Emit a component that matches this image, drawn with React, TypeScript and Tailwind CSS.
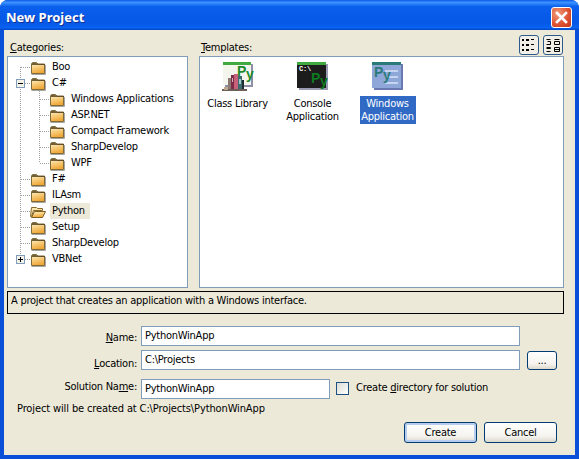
import React from 'react';

const xpButton =
  'rounded-[3px] border border-[#003c74] bg-[linear-gradient(180deg,#ffffff_0%,#f4f3ee_70%,#dcd8cc_100%)] text-black';

function Folder({ x, open = false }: { x: number; open?: boolean }) {
  if (open) {
    return (
      <g transform={`translate(${x} 1)`}>
        <path d="M1.5 3.5h5l1 1h5v2h-9l-2 6h-1z" fill="#f6e6ae" stroke="#8a6a2a" />
        <path d="M4.5 7.5h11l-3 6h-11z" fill="url(#folderFill)" stroke="#7d5f22" />
      </g>
    );
  }
  return (
    <g transform={`translate(${x} 1)`}>
      <path d="M1.5 3.5l1-1h4l1.5 1.5h6.5v9.5h-13z" fill="url(#folderFill)" stroke="#7f6a3a" />
      <path d="M2 5h13v-1h-7.2l-1.5-1h-4.3z" fill="#4c3c1c" opacity=".8" />
      <path d="M15.5 5v9.5h-14" fill="none" stroke="#a8a8a0" />
    </g>
  );
}

function TreeLines({ depth, last, first, hasBox, open }: { depth: number; last: boolean; first: boolean; hasBox?: 'plus' | 'minus'; open?: boolean }) {
  const dotted = { stroke: '#a0a0a0', strokeDasharray: '1 1', fill: 'none' } as const;
  return (
    <svg width={depth === 0 ? 50 : 69} height="16" className="shrink-0">
      <defs>
        <linearGradient id="folderFill" x1="0" y1="0" x2="0.3" y2="1">
          <stop offset="0" stopColor="#fff6cc" />
          <stop offset="1" stopColor="#f0a838" />
        </linearGradient>
      </defs>
      {/* root level vertical */}
      {depth === 0 ? (
        <>
          <path d={`M20.5 ${first ? 8 : 0}V${last ? 8 : 16}`} {...dotted} />
          <path d="M21 8.5H31" {...dotted} />
        </>
      ) : (
        <>
          <path d="M20.5 0V16" {...dotted} />
          <path d={`M39.5 0V${last ? 8 : 16}`} {...dotted} />
          <path d="M40 8.5H50" {...dotted} />
        </>
      )}
      {hasBox && (
        <g>
          <rect x="16.5" y="4.5" width="8" height="8" fill="#f2f2ea" stroke="#7f9db9" />
          <path d="M18 8.5h5" stroke="#000" />
          {hasBox === 'plus' && <path d="M20.5 6v5" stroke="#000" />}
        </g>
      )}
      {hasBox === 'minus' && <path d="M39.5 11V16" {...dotted} />}
      <Folder x={depth === 0 ? 30 : 49} open={open} />
    </svg>
  );
}

type Category = { label: string; depth: number; box?: 'plus' | 'minus'; selected?: boolean };

const categories: Category[] = [
  { label: 'Boo', depth: 0 },
  { label: 'C#', depth: 0, box: 'minus' },
  { label: 'Windows Applications', depth: 1 },
  { label: 'ASP.NET', depth: 1 },
  { label: 'Compact Framework', depth: 1 },
  { label: 'SharpDevelop', depth: 1 },
  { label: 'WPF', depth: 1 },
  { label: 'F#', depth: 0 },
  { label: 'ILAsm', depth: 0 },
  { label: 'Python', depth: 0, selected: true },
  { label: 'Setup', depth: 0 },
  { label: 'SharpDevelop', depth: 0 },
  { label: 'VBNet', depth: 0, box: 'plus' },
];

function ClassLibraryIcon() {
  return (
    <svg width="32" height="32" viewBox="0 0 32 32">
      <rect x="3" y="3" width="28" height="23" fill="#8f8fa8" />
      <rect x="1" y="1" width="28" height="23" fill="#f4f6ee" />
      <rect x="1" y="1" width="28" height="3" fill="#3faa3f" />
      <text x="15" y="15" fontFamily="Liberation Sans, sans-serif" fontWeight="700" fontSize="14" fill="#1c8a2c">P<tspan dy="3">y</tspan></text>
      <rect x="6" y="17" width="3" height="12" fill="#8c7a70" />
      <rect x="9" y="14" width="3" height="16" fill="#7c2c48" />
      <rect x="10" y="17" width="1" height="4" fill="#d8b0b8" />
      <rect x="12" y="13" width="4" height="17" fill="#c8607a" />
      <rect x="16" y="15" width="4" height="15" fill="#3c6c70" />
      <rect x="17" y="18" width="2" height="5" fill="#a0c8c8" />
      <rect x="20" y="19" width="2" height="11" fill="#1c2c30" />
      <rect x="0" y="28" width="25" height="2" fill="#6a6058" />
      <rect x="2" y="26" width="4" height="3" fill="#c0a890" />
    </svg>
  );
}

function ConsoleIcon() {
  return (
    <svg width="32" height="32" viewBox="0 0 32 32">
      <rect x="2" y="3" width="29" height="26" fill="#9a9ab0" />
      <rect x="0" y="1" width="29" height="26" fill="#1c1c1c" />
      <rect x="0" y="1" width="29" height="3" fill="#3fa83f" />
      <text x="2" y="10" fontFamily="Liberation Mono, monospace" fontWeight="700" fontSize="7" fill="#ffffff">C:\</text>
      <text x="14" y="22" fontFamily="Liberation Sans, sans-serif" fontWeight="700" fontSize="14" fill="#0e7a1e">P<tspan dy="3">y</tspan></text>
    </svg>
  );
}

function WindowsAppIcon() {
  return (
    <svg width="32" height="32" viewBox="0 0 32 32">
      <rect x="2" y="3" width="29" height="26" fill="#6a7ab0" />
      <rect x="0" y="1" width="29" height="26" fill="#8ea6d8" />
      <rect x="0" y="1" width="29" height="3" fill="#2a7a78" />
      <rect x="13" y="9" width="13" height="2" fill="#c6d4f0" />
      <rect x="13" y="15" width="13" height="2" fill="#c6d4f0" />
      <rect x="13" y="21" width="13" height="2" fill="#c6d4f0" />
      <text x="2" y="16" fontFamily="Liberation Sans, sans-serif" fontWeight="700" fontSize="14" fill="#2a7a78">P<tspan dy="3">y</tspan></text>
    </svg>
  );
}

function ViewButton({ kind }: { kind: 'list' | 'icons' }) {
  return (
    <button className="h-[20px] w-[20px] rounded-[3px] border border-[#2c5a8c] bg-[#f1efe6] flex items-center justify-center">
      {kind === 'list' ? (
        <svg width="14" height="12" viewBox="0 0 14 12" fill="#000">
          <rect x="0" y="0" width="2" height="2" /><rect x="4" y="0" width="3" height="2" /><rect x="9" y="0" width="3" height="1" />
          <rect x="0" y="5" width="2" height="2" /><rect x="4" y="5" width="3" height="2" /><rect x="9" y="5" width="3" height="1" />
          <rect x="0" y="10" width="2" height="2" /><rect x="4" y="10" width="3" height="2" /><rect x="9" y="10" width="3" height="1" />
        </svg>
      ) : (
        <svg width="14" height="13" viewBox="0 0 14 13" fill="none" stroke="#000">
          <path d="M.5.5h4M.5 5.5h4v-3h-3M.5 8.5h4v1h-4M.5 12.5h4" />
          <path d="M8.5.5h5M8.5 5.5h5v-3h-5zM8.5 8.5h5v4h-5zM8.5 10.5h5" />
        </svg>
      )}
    </button>
  );
}

function Mn({ children }: { children: React.ReactNode }) {
  return <span className="underline underline-offset-1">{children}</span>;
}

const field =
  'h-[20px] border border-[#7f9db9] bg-white pl-[3px] flex items-center text-black';

export default function App() {
  return (
    <div
      className="w-[579px] h-[459px] flex flex-col rounded-t-[8px] overflow-hidden bg-[#0a4fd8] text-[11px] leading-[14px] tracking-[-0.25px] text-black"
      style={{ fontFamily: '"DejaVu Sans Condensed", "DejaVu Sans", sans-serif', fontStretch: 'condensed' }}
    >
      {/* Title bar */}
      <div className="h-[30px] shrink-0 flex items-center justify-between pl-[6px] pr-[7px] bg-[linear-gradient(180deg,#0a58e8_0%,#3e93ff_8%,#0a5fec_22%,#0658e6_75%,#0a62f0_92%,#0148c8_100%)]">
        <span className="mt-[4px] text-white font-bold text-[13px] tracking-normal [text-shadow:1px_1px_0_#0f2f90]" style={{ fontFamily: '"Noto Sans", sans-serif', fontStretch: 'normal' }}>
          New Project
        </span>
        <button className="mt-[4px] h-[21px] w-[21px] rounded-[3px] border border-white bg-[radial-gradient(circle_at_30%_30%,#f09a78,#dc5030_60%,#c03818)] flex items-center justify-center">
          <svg width="13" height="13" viewBox="0 0 13 13">
            <path d="M2 2L11 11M11 2L2 11" stroke="#fff" strokeWidth="2.6" strokeLinecap="square" />
          </svg>
        </button>
      </div>

      {/* Client area */}
      <div className="flex-1 mx-[4px] mb-[4px] bg-[#ece9d8] pl-[3px] pr-[11px] pt-[5px] flex flex-col">
        <div className="grid grid-cols-[181px_365px] gap-x-[11px]">
          <div className="h-[21px] pt-[6px] pl-[3px]"><Mn>C</Mn>ategories:</div>
          <div className="h-[21px] pt-[6px] pl-[2px] flex justify-between pr-[1px]">
            <span><Mn>T</Mn>emplates:</span>
            <div className="flex gap-[4px] -mt-[6px]">
              <ViewButton kind="list" />
              <ViewButton kind="icons" />
            </div>
          </div>

          {/* Category tree */}
          <div className="h-[232px] border border-[#7f9db9] bg-white pt-[2px]">
            {categories.map((c, i) => (
              <div key={i} className="h-[16px] flex items-center">
                <div className="-ml-[8px] flex items-center">
                  <TreeLines
                    depth={c.depth}
                    first={i === 0}
                    last={c.label === 'VBNet' || c.label === 'WPF'}
                    hasBox={c.box}
                    open={c.selected}
                  />
                </div>
                <span className={`pl-[2px] h-[16px] leading-[15px] ${c.selected ? 'bg-[#ece9d8] pr-[5px]' : 'pr-[2px]'}`}>
                  {c.label}
                </span>
              </div>
            ))}
          </div>

          {/* Templates */}
          <div className="h-[232px] border border-[#7f9db9] bg-white flex items-start pt-[4px]">
            <div className="w-[75px] flex flex-col items-center">
              <ClassLibraryIcon />
              <span className="mt-[4px] text-center leading-[13px]">Class Library</span>
            </div>
            <div className="w-[75px] flex flex-col items-center">
              <ConsoleIcon />
              <span className="mt-[4px] text-center leading-[13px]">Console Application</span>
            </div>
            <div className="w-[75px] flex flex-col items-center">
              <WindowsAppIcon />
              <span className="mt-[3px] w-[56px] h-[28px] py-[1px] text-center leading-[13px] bg-[#316ac5] text-white">Windows Application</span>
            </div>
          </div>
        </div>

        {/* Description */}
        <div className="mt-[3px] h-[23px] w-[557px] border border-black pl-[3px] pt-[1px] leading-[15px]">
          A project that creates an application with a Windows interface.
        </div>

        {/* Form */}
        <div className="mt-[12px] flex">
          <div className="w-[130px] text-right pt-[5px]"><Mn>N</Mn>ame:</div>
          <div className={`${field} ml-[4px] w-[379px]`}>PythonWinApp</div>
        </div>
        <div className="mt-[4px] flex">
          <div className="w-[130px] text-right pt-[7px]"><Mn>L</Mn>ocation:</div>
          <div className={`${field} ml-[4px] w-[379px]`}>C:\Projects</div>
          <button className={`${xpButton} ml-[7px] mt-[1px] h-[19px] w-[30px] leading-[12px]`}>...</button>
        </div>
        <div className="mt-[8px] flex">
          <div className="w-[130px] text-right pt-[1px]">Solution Na<Mn>m</Mn>e:</div>
          <div className={`${field} ml-[4px] w-[189px]`}>PythonWinApp</div>
          <div className="ml-[6px] mt-[3px] h-[13px] w-[13px] border border-[#1c5180] bg-[linear-gradient(135deg,#dcdcd7,#ffffff)]" />
          <div className="ml-[7px] mt-[2px]">Create <Mn>d</Mn>irectory for solution</div>
        </div>
        <div className="mt-[3px] ml-[10px] tracking-[-0.12px]">Project will be created at C:\Projects\PythonWinApp</div>

        <div className="mt-[6px] flex justify-end gap-[7px] pr-[7px]">
          <button className={`${xpButton} h-[21px] w-[73px] shadow-[inset_0_0_0_2px_#b6cdf0]`}>Create</button>
          <button className={`${xpButton} h-[21px] w-[73px]`}>Cancel</button>
        </div>
      </div>
    </div>
  );
}
